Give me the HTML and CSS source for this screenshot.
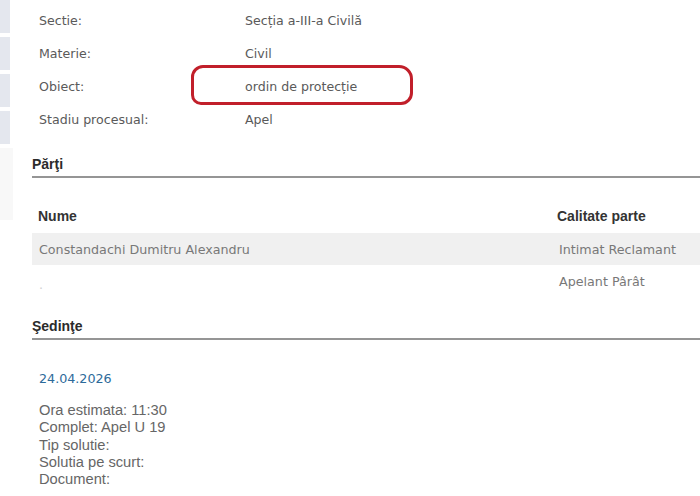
FILE: index.html
```html
<!DOCTYPE html>
<html lang="ro">
<head>
<meta charset="utf-8">
<title>Dosar</title>
<link rel="stylesheet" href="styles.css">
</head>
<body>
<div class="page">
  <aside class="side">
    <div class="tab"></div>
    <div class="tab"></div>
    <div class="tab"></div>
    <div class="tab"></div>
    <div class="pane"></div>
  </aside>
  <main class="main">
    <div class="info">
      <div class="info-row"><span class="lbl">Sectie:</span><span class="val">Secția a-III-a Civilă</span></div>
      <div class="info-row"><span class="lbl">Materie:</span><span class="val">Civil</span></div>
      <div class="info-row"><span class="lbl">Obiect:</span><span class="val">ordin de protecție</span></div>
      <div class="info-row"><span class="lbl">Stadiu procesual:</span><span class="val">Apel</span></div>
      <div class="mark"></div>
    </div>

    <h2 class="section">Părţi</h2>
    <div class="parties">
      <div class="prow head"><span>Nume</span><span>Calitate parte</span></div>
      <div class="prow shade"><span>Constandachi Dumitru Alexandru</span><span>Intimat Reclamant</span></div>
      <div class="prow"><span class="dot">.</span><span>Apelant Pârât</span></div>
    </div>

    <h2 class="section sed">Şedinţe</h2>
    <div class="hearing">
      <div class="date">24.04.2026</div>
      <div class="details">
        <div>Ora estimata: 11:30</div>
        <div>Complet: Apel U 19</div>
        <div>Tip solutie:</div>
        <div>Solutia pe scurt:</div>
        <div>Document:</div>
      </div>
    </div>
  </main>
</div>
</body>
</html>
```

FILE: styles.css
```css
html, body {
  margin: 0;
  padding: 0;
  background: #ffffff;
}
body {
  font-family: "DejaVu Sans", Verdana, sans-serif;
  width: 700px;
  height: 496px;
  overflow: hidden;
}
.page {
  display: grid;
  grid-template-columns: 13px 1fr;
  column-gap: 19px;
}
.side {
  display: flex;
  flex-direction: column;
  gap: 4px;
}
.tab {
  width: 10px;
  height: 33px;
  background: #e4e7ee;
}
.pane {
  width: 13px;
  height: 72px;
  background: #f8f8f8;
}
.main {
  padding-top: 4px;
  min-width: 0;
}
.info {
  position: relative;
}
.info-row {
  display: grid;
  grid-template-columns: 206px 1fr;
  height: 33px;
  align-items: center;
  padding-left: 7px;
  font-size: 12.6px;
  color: #5a5a5a;
}
.mark {
  position: absolute;
  left: 159px;
  top: 61px;
  width: 216px;
  height: 34px;
  border: 3px solid #c11f2a;
  border-radius: 12px 14px 12px 10px;
}
.section {
  margin: 16px 0 0;
  height: 24px;
  line-height: 24px;
  font-family: "Liberation Sans", Arial, sans-serif;
  font-size: 14px;
  font-weight: bold;
  color: #2b2b2b;
  border-bottom: 2px solid #959595;
  margin-right: -20px;
}
.parties {
  margin-top: 21px;
  margin-right: -20px;
}
.prow {
  display: grid;
  grid-template-columns: 521px 1fr;
  height: 33px;
  align-items: center;
  font-size: 12.7px;
  color: #787878;
}
.prow span:first-child {
  padding-left: 7px;
}
.prow span:last-child {
  padding-left: 6px;
}
.prow.head {
  height: 34px;
  font-family: "Liberation Sans", Arial, sans-serif;
  font-size: 14px;
  font-weight: bold;
  color: #333333;
}
.prow.head span:first-child {
  padding-left: 6px;
}
.prow.head span:last-child {
  padding-left: 4px;
}
.prow.shade {
  background: #f0f0f0;
  height: 32px;
}
.dot {
  color: #d0d0d0;
  align-self: end;
  padding-bottom: 6px;
}
.hearing {
  padding-left: 7px;
}
.date {
  margin-top: 30px;
  font-size: 12.7px;
  line-height: 17px;
  color: #2d6a9a;
}
.details {
  margin-top: 15px;
  font-family: "Liberation Sans", Arial, sans-serif;
  font-size: 14.7px;
  line-height: 17.25px;
  color: #666666;
}
```
